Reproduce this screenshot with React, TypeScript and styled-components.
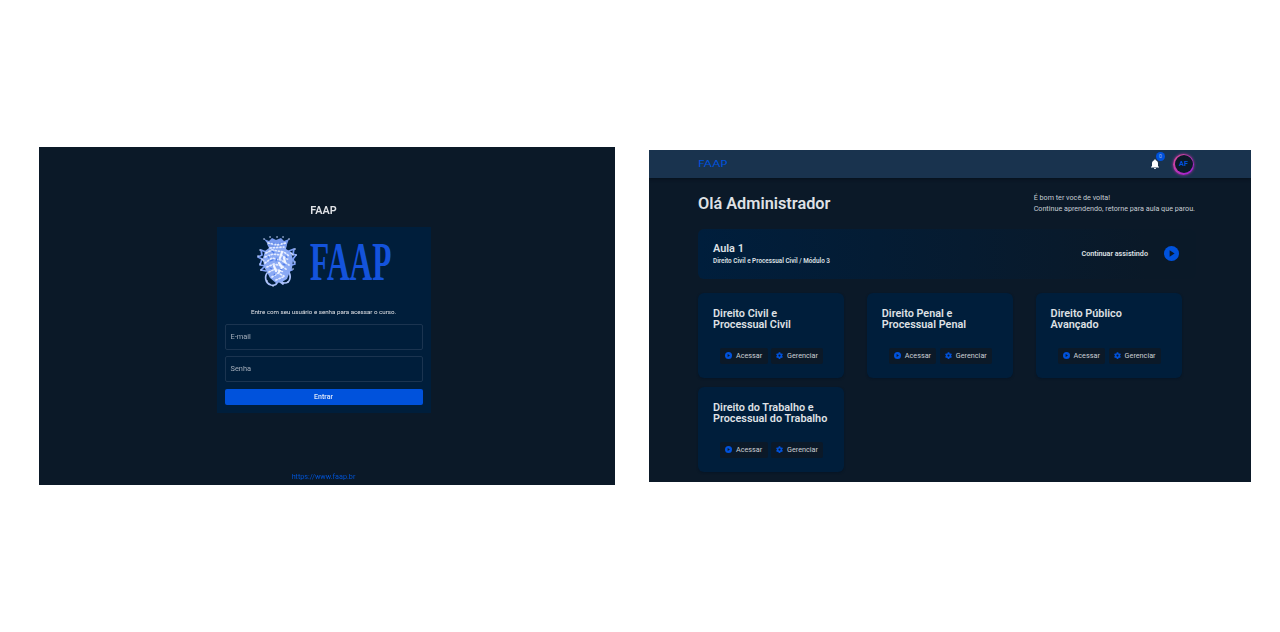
import React from "react";
import styled, { createGlobalStyle } from "styled-components";

const Global = createGlobalStyle`
  * { box-sizing: border-box; }
  body { margin: 0; background: #fff; font-family: Roboto, sans-serif; color: #dfe1e5; }
  h1, h2, h3, p { margin: 0; }
`;

const Page = styled.main`
  display: flex;
  align-items: center;
  gap: 34px;
  width: 1280px;
  height: 632px;
  padding: 0 29px 0 39px;
`;

const LoginScreen = styled.section`
  display: flex;
  flex-direction: column;
  align-items: center;
  width: 576px;
  height: 338px;
  padding: 56px 0 0;
  background: #0b1928;
`;

const LoginTitle = styled.h1`
  height: 24px;
  padding-right: 7px;
  font-size: 10.8px;
  line-height: 15px;
  font-weight: 600;
  filter: blur(0.4px);
`;

const LoginCard = styled.form`
  display: flex;
  flex-direction: column;
  width: 214px;
  height: 186px;
  margin-right: 7px;
  padding: 0 8px;
  background: #001e3b;
`;

const Brand = styled.div`
  height: 78px;
  svg { display: block; }
`;

const Hint = styled.p`
  height: 19px;
  font-size: 6.2px;
  line-height: 14px;
  text-align: center;
  white-space: nowrap;
  filter: blur(0.55px);
`;

const Field = styled.div`
  height: 26px;
  margin-bottom: 6px;
  padding-left: 5px;
  border: 1px solid #1b3450;
  border-radius: 2px;
  color: #a3aebb;
  font-size: 7.4px;
  line-height: 24px;
  span { display: block; filter: blur(0.55px); }
`;

const Submit = styled.button`
  height: 16px;
  margin-top: 1px;
  padding: 0;
  border: 0;
  border-radius: 2px;
  background: #0052dc;
  color: #dfe8fa;
  font: 500 7px/16px Roboto, sans-serif;
  span { display: block; filter: blur(0.45px); }
`;

const SiteLink = styled.a`
  margin: 58px 7px 0 0;
  color: #0052d2;
  font-size: 7.2px;
  line-height: 11px;
  filter: blur(0.45px);
`;

const Dashboard = styled.section`
  width: 602px;
  height: 332px;
  overflow: hidden;
  background: #0b1928;
`;

const TopBar = styled.header`
  display: flex;
  align-items: center;
  height: 28px;
  padding: 0 57px 0 49px;
  background: #19334e;
  box-shadow: 0 1px 3px #06101b;
`;

const Alerts = styled.div`
  position: relative;
  width: 12px;
  height: 12px;
  margin: 0 12px 0 auto;
  svg { display: block; }
`;

const Badge = styled.span`
  position: absolute;
  top: -6px;
  left: 7px;
  width: 9px;
  height: 9px;
  border-radius: 50%;
  background: #0052dc;
  color: #9fb9e8;
  font-size: 5px;
  line-height: 9px;
  text-align: center;
`;

const Avatar = styled.div`
  width: 21px;
  height: 21px;
  padding: 1.5px;
  border-radius: 50%;
  background: linear-gradient(135deg, #dc4f92, #9a18dc);
  box-shadow: 0 0 3px #b02fa0;
  span {
    display: block;
    height: 18px;
    border-radius: 50%;
    background: #0b1928;
    color: #0052dc;
    font-size: 7.4px;
    font-weight: 600;
    line-height: 18px;
    text-align: center;
  }
`;

const Content = styled.div`
  padding: 0 55px 0 49px;
`;

const Greeting = styled.div`
  display: flex;
  justify-content: space-between;
  height: 51px;
  padding: 15px 1px 0 0;
  h1 { font-size: 16.3px; line-height: 21px; font-weight: 600; white-space: nowrap; }
  p { font-size: 7.2px; line-height: 10.8px; white-space: nowrap; color: #c7cdd4; }
`;

const Banner = styled.div`
  display: flex;
  align-items: center;
  justify-content: space-between;
  height: 50px;
  padding: 0 17px 0 15px;
  border-radius: 6px;
  background: linear-gradient(90deg, #001e3c, #0a1928 90%);
  h2 { font-size: 10.9px; line-height: 13px; font-weight: 600; }
  p { font-size: 6.35px; line-height: 12px; font-weight: 600; }
`;

const Resume = styled.div`
  display: flex;
  align-items: center;
  gap: 16px;
  padding-bottom: 1px;
  font-size: 7.2px;
  font-weight: 600;
  svg { display: block; }
`;

const Courses = styled.div`
  display: grid;
  grid-template-columns: repeat(3, 146px);
  gap: 9px 22.8px;
  padding-top: 14px;
`;

const Course = styled.article`
  height: 85px;
  padding: 15px 0 0 15px;
  border-radius: 6px;
  background: #001e3b;
  box-shadow: 0 1px 2px #071525;
  h3 { height: 40px; font-size: 10.85px; line-height: 11px; font-weight: 600; white-space: nowrap; }
`;

const Actions = styled.div`
  display: flex;
  gap: 3.5px;
  padding-left: 7px;
`;

const Action = styled.button<{ $width: number }>`
  display: flex;
  align-items: center;
  gap: 4px;
  width: ${(p) => p.$width}px;
  height: 15.5px;
  padding: 0 0 0 5px;
  border: 0;
  border-radius: 2px;
  background: #0b1928;
  color: #ccd0d5;
  font: 400 7.25px/15px Roboto, sans-serif;
  svg { flex: none; }
`;

const Crest = () => (
  <g transform="translate(32 9)" style={{ filter: "blur(0.5px)" }}>
    <g fill="none" stroke="#7d9ff5" strokeWidth="1.7" strokeLinecap="round" strokeLinejoin="round">
      <path d="M9 16 4 14l1 5-4 2 4 2-2 6 6 1M32 15l5-2-1 5 3 1-3 4 2 5-6 2M8 30l-4 4 5 1M32 31l3 3-4 1" />
      <path stroke="#a9c0fb" d="M11 36c-4 4-3 11 3 13 4 1 6-1 7-4M31 35c4 5 2 12-3 12-4 0-4-3-3-5M22 45l4 3" />
    </g>
    <path fill="#8aa9f4" d="M10 8h20l-1 5 5 3 2 8-1 8-3 6-2 5-5 3-6 1-6-5-3-6-3-5-1-9 2-7 4-3z" />
    <path fill="#7799ed" d="M7 3l5 2 3-3 4 2 5-2 3 3 5-2-3 8-8 1-8-1z" />
    <g fill="none" stroke="#e3ebfe" strokeWidth="1.7" strokeLinecap="round" strokeDasharray="1.2 2.1">
      <path d="M11 7l9 2 9-2M13 12l14-1M9 17l6-3 12 2 5 4M8 21l8-3 8 1 8 5M8 27l7-5 9 2 8 5M10 31l7-3 8 2 5 4M12 36l6-3 9 3M15 41l6-4 6 3M19 44l7-3" />
    </g>
    <g fill="none" stroke="#f1f5ff" strokeWidth="2.2" strokeLinecap="round">
      <path d="M25 16l-2 6M22 27l3 4-3 5M17 30l2 5M27 22l1 4" />
    </g>
    <g fill="none" stroke="#c8d7fc" strokeWidth="1.6" strokeLinecap="round">
      <path d="M7 3h.1M13 1h.1M20 1h.1M26 1h.1M32 3h.1M3 14h.1M1 20h.1M3 28h.1M4 34h.1M38 13h.1M39 19h.1M38 26h.1M36 33h.1M10 45h.1M31 46h.1M16 50h.1M5 23l2 2M34 17l2 2" />
    </g>
    <g fill="none" stroke="#4d7be8" strokeWidth="1.1" strokeLinecap="round">
      <path d="M15 15l2 2M13 25l3-1M20 22l-1 3M13 32l2 1M26 28l2 1M18 38l-1 1M23 33l2 1M29 20l1 2M11 20l1 2M17 7v1M23 7v1" />
    </g>
  </g>
);

const PlayMark = ({ size, cut }: { size: number; cut: string }) => (
  <svg width={size} height={size} viewBox="0 0 16 16">
    <circle cx="8" cy="8" r="8" fill="#0052dc" />
    <path d="M6 4.6 11.3 8 6 11.4z" fill={cut} />
  </svg>
);

const GearMark = () => (
  <svg width="7" height="7" viewBox="1 1 22 22">
    <path
      fill="#0052dc"
      fillRule="evenodd"
      d="M9.5 2h5l.6 3 2 1.2 3-1 2.4 4.2-2.3 2v2.4l2.3 2-2.4 4.2-3-1-2 1.2-.6 3h-5l-.6-3-2-1.2-3 1-2.4-4.2 2.3-2v-2.4l-2.3-2 2.4-4.2 3 1 2-1.2zM12 8.8a3.4 3.4 0 1 0 0 6.8 3.4 3.4 0 0 0 0-6.8z"
    />
  </svg>
);

const courses = [
  ["Direito Civil e", "Processual Civil"],
  ["Direito Penal e", "Processual Penal"],
  ["Direito Público", "Avançado"],
  ["Direito do Trabalho e", "Processual do Trabalho"],
];

export default function App() {
  return (
    <Page>
      <Global />
      <LoginScreen>
        <LoginTitle>FAAP</LoginTitle>
        <LoginCard>
          <Brand>
            <svg width="198" height="70" viewBox="0 0 198 70">
              <Crest />
              <text
                transform="translate(85 52.5) scale(.572 1)"
                fill="#1453dc"
                fontFamily="Liberation Serif, serif"
                fontWeight="700"
                fontSize="55"
              >
                FAAP
              </text>
            </svg>
          </Brand>
          <Hint>Entre com seu usuário e senha para acessar o curso.</Hint>
          <Field><span>E-mail</span></Field>
          <Field><span>Senha</span></Field>
          <Submit type="button"><span>Entrar</span></Submit>
        </LoginCard>
        <SiteLink>https://www.faap.br</SiteLink>
      </LoginScreen>
      <Dashboard>
        <TopBar>
          <svg width="30" height="10" viewBox="0 0 30 10">
            <text x="0" y="8" fill="#0052dc" fontFamily="DejaVu Sans, sans-serif" fontSize="8" textLength="29.5" lengthAdjust="spacingAndGlyphs">
              FAAP
            </text>
          </svg>
          <Alerts>
            <svg width="12" height="12" viewBox="0 0 24 24" fill="#fff">
              <path d="M12 22c1.1 0 2-.9 2-2h-4c0 1.1.9 2 2 2zm6-6v-5c0-3.07-1.64-5.64-4.5-6.32V4c0-.83-.67-1.5-1.5-1.5s-1.5.67-1.5 1.5v.68C7.63 5.36 6 7.92 6 11v5l-2 2v1h16v-1l-2-2z" />
            </svg>
            <Badge>0</Badge>
          </Alerts>
          <Avatar><span>AF</span></Avatar>
        </TopBar>
        <Content>
          <Greeting>
            <h1>Olá Administrador</h1>
            <p>É bom ter você de volta!<br />Continue aprendendo, retorne para aula que parou.</p>
          </Greeting>
          <Banner>
            <div>
              <h2>Aula 1</h2>
              <p>Direito Civil e Processual Civil / Módulo 3</p>
            </div>
            <Resume>
              Continuar assistindo
              <PlayMark size={15} cut="#0b1928" />
            </Resume>
          </Banner>
          <Courses>
            {courses.map(([first, second]) => (
              <Course key={first}>
                <h3>{first}<br />{second}</h3>
                <Actions>
                  <Action $width={47.5}><PlayMark size={7} cut="#0b1928" />Acessar</Action>
                  <Action $width={52}><GearMark />Gerenciar</Action>
                </Actions>
              </Course>
            ))}
          </Courses>
        </Content>
      </Dashboard>
    </Page>
  );
}
